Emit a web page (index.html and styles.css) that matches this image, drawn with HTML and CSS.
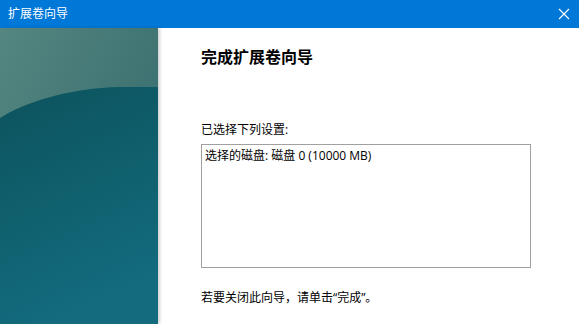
FILE: index.html
```html
<!DOCTYPE html>
<html lang="zh-CN">
<head>
    <meta charset="UTF-8">
    <title>扩展卷向导</title>
    <link rel="stylesheet" href="styles.css">
</head>
<body>
    <div class="window">
        <div class="titlebar">
            <span class="title">扩展卷向导</span>
            <svg class="close" width="12" height="12" viewBox="0 0 12 12">
                <path d="M1 1 L11 11 M11 1 L1 11" stroke="#fff" stroke-width="1.1" fill="none"/>
            </svg>
        </div>
        <div class="main">
            <div class="side">
                <svg width="158" height="296" viewBox="0 0 158 296" preserveAspectRatio="none">
                    <defs>
                        <linearGradient id="top" x1="0" y1="0" x2="1" y2="1">
                            <stop offset="0" stop-color="#558680"/>
                            <stop offset="1" stop-color="#2d6569"/>
                        </linearGradient>
                        <linearGradient id="bottom" x1="0" y1="0" x2="0.3" y2="1">
                            <stop offset="0" stop-color="#0c535d"/>
                            <stop offset="1" stop-color="#136b7d"/>
                        </linearGradient>
                    </defs>
                    <rect width="158" height="296" fill="url(#top)"/>
                    <path d="M0 90 C25 74 70 60 120 59 L158 59 L158 296 L0 296 Z" fill="url(#bottom)"/>
                </svg>
            </div>
            <div class="content">
                <h1 class="heading">完成扩展卷向导</h1>
                <p class="label">已选择下列设置:</p>
                <div class="settings">选择的磁盘: 磁盘 0 (10000 MB)</div>
                <p class="hint">若要关闭此向导，请单击“完成”。</p>
            </div>
        </div>
    </div>
</body>
</html>
```

FILE: styles.css
```css
body {
    margin: 0;
    padding: 0;
    font-family: "Open Sans", "Noto Sans CJK SC", sans-serif;
    background: #fff;
    overflow: hidden;
}

.window {
    width: 579px;
    height: 324px;
    display: flex;
    flex-direction: column;
}

.titlebar {
    height: 28px;
    background: #0078d7;
    color: #fff;
    display: flex;
    align-items: center;
    justify-content: space-between;
    padding: 0 9px 1px 8px;
    box-sizing: border-box;
}

.title {
    font-size: 12px;
    line-height: 16px;
}

.close {
    display: block;
}

.main {
    flex: 1;
    display: flex;
}

.side {
    width: 158px;
    flex: none;
    box-shadow: 2px 0 3px rgba(0, 0, 0, 0.18);
    position: relative;
}

.side svg {
    display: block;
}

.content {
    padding: 18px 0 0 43px;
    font-size: 12px;
    color: #000;
}

.heading {
    margin: 0;
    font-size: 16px;
    line-height: 22px;
    font-weight: bold;
}

.label {
    margin: 54px 0 0;
    line-height: 16px;
}

.settings {
    margin-top: 6px;
    width: 330px;
    height: 124px;
    box-sizing: border-box;
    border: 1px solid #a0a0a0;
    padding: 3px 3px;
    line-height: 16px;
}

.hint {
    margin: 22px 0 0;
    line-height: 16px;
}
```
